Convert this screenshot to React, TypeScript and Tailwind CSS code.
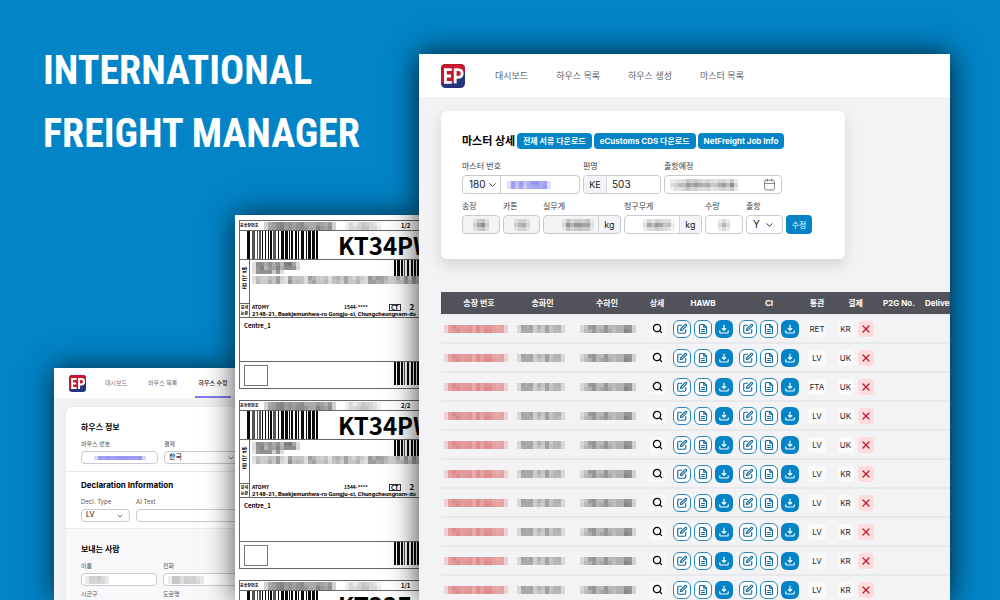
import type { ReactNode } from "react";
import { Search, ChevronDown, Calendar, X } from "lucide-react";

const sans = "font-['Inter','Noto_Sans_CJK_KR',sans-serif]";
const print = "font-['Noto_Sans_CJK_KR','Noto_Sans',sans-serif]";

function noise(n: number) {
  const v = Math.sin(n * 12.9898 + 4.137) * 43758.5453;
  return v - Math.floor(v);
}

/** Pixelated strip that hides private values. */
function Mosaic({ cols, rows = 2, cell = 4, color = "#777", seed = 1, low = 0.2, high = 0.8, className = "" }: {
  cols: number; rows?: number; cell?: number; color?: string; seed?: number; low?: number; high?: number; className?: string;
}) {
  const cells = [];
  for (let r = 0; r < rows; r++)
    for (let c = 0; c < cols; c++) {
      const side = c === 0 || c === cols - 1 ? 0.4 : 1;
      const rim = rows === 3 && r !== 1 ? 0.5 : 1;
      const mix = noise(seed * 31 + c) * 0.7 + noise(seed * 31 + r * 57 + c + 9) * 0.3;
      cells.push(
        <rect key={`${r}-${c}`} x={c * cell} y={r * cell} width={cell} height={cell} fill={color}
          opacity={(low + mix * (high - low)) * side * rim} />
      );
    }
  return (
    <svg aria-hidden="true" width={cols * cell} height={rows * cell} shapeRendering="crispEdges" className={`block shrink-0 ${className}`}>
      {cells}
    </svg>
  );
}

function Barcode({ width, height, seed, className = "" }: { width: number; height: number; seed: number; className?: string }) {
  const bars = [];
  let x = 0;
  let i = 0;
  while (x < width) {
    const w = 1 + Math.floor(noise(seed + i * 3) * 3);
    const bar = Math.min(w, width - x);
    bars.push(<rect key={i} x={x} y={0} width={bar} height={height} fill={noise(seed + i) > 0.75 ? "#555" : "#0a0a0a"} />);
    x += w + 1 + Math.floor(noise(seed + i * 7 + 2) * 1.7);
    i++;
  }
  return (
    <svg aria-hidden="true" width={width} height={height} shapeRendering="crispEdges" className={`block shrink-0 ${className}`}>
      {bars}
    </svg>
  );
}

function Logo({ className }: { className: string }) {
  return (
    <svg viewBox="0 0 24 24" role="img" aria-label="EP" className={`shrink-0 ${className}`}>
      <defs>
        <clipPath id="logo-shape"><rect width="24" height="24" rx="4.5" /></clipPath>
      </defs>
      <g clipPath="url(#logo-shape)">
        <rect width="24" height="24" fill="#24357c" />
        <path d="M0 0H24V8C19 8 17 18 11 19C7 20 3 20 0 19Z" fill="#c8182e" />
      </g>
      <g fill="none" stroke="#fff" strokeWidth="2.8">
        <path d="M10.8 5.6H4.4V18.4H10.8M4.4 12H10" />
        <path d="M14.2 19.6V5.6H17.4A3.6 3.6 0 0 1 17.4 13.3H14.2" />
      </g>
    </svg>
  );
}

function Glyph({ children }: { children: ReactNode }) {
  return (
    <svg aria-hidden="true" viewBox="0 0 24 24" fill="none" stroke="currentColor" strokeWidth="2.3" strokeLinecap="round" strokeLinejoin="round" className="size-[12px]">
      {children}
    </svg>
  );
}

const box = "rounded-[4px] border border-[#c9c9ce] bg-white";
const greyBox = "rounded-[4px] border border-[#c9c9ce] bg-[#f4f4f6]";

function Field({ id, label, className, children }: { id: string; label: string; className: string; children: ReactNode }) {
  return (
    <div className={`flex flex-col ${className}`}>
      <label htmlFor={id} className="h-[15px] text-[8px] leading-[12px] text-[#3f3f46] whitespace-nowrap">{label}</label>
      {children}
    </div>
  );
}

function Masked({ children, align = "justify-start", className = "" }: { children: ReactNode; align?: string; className?: string }) {
  return <span className={`pointer-events-none absolute inset-0 flex items-center ${align} ${className}`}>{children}</span>;
}

function SelectBox({ id, value, options, className, chevron }: { id: string; value: string; options: string[]; className: string; chevron: string }) {
  return (
    <span className={`relative block ${className}`}>
      <select id={id} defaultValue={value} className="h-full w-full appearance-none bg-transparent outline-none">
        {options.map((o) => <option key={o}>{o}</option>)}
      </select>
      <ChevronDown aria-hidden="true" className={`pointer-events-none absolute top-1/2 -translate-y-1/2 text-[#27272a] ${chevron}`} />
    </span>
  );
}

const blank = "h-full w-full min-w-0 bg-transparent outline-none";

function MasterCard() {
  return (
    <form className="mt-[14px] w-[404px] max-w-full rounded-md bg-white px-[21px] pt-[22px] pb-[25px] shadow-[0_6px_14px_rgba(0,0,0,0.13)]">
      <div className="flex items-center gap-[2px]">
        <h2 className="w-[53px] text-[11px] leading-[16px] font-bold whitespace-nowrap text-black">마스터 상세</h2>
        {["전체 서류 다운로드", "eCustoms CDS 다운로드", "NetFreight Job Info"].map((t) => (
          <button key={t} type="button" className="h-[16px] rounded-[4px] bg-[#0284c7] px-[6px] text-[8px] leading-[16px] font-bold whitespace-nowrap text-white">{t}</button>
        ))}
      </div>

      <div className="mt-[11px] flex gap-[3px] text-[10px] text-[#18181b]">
        <Field id="awb" label="마스터 번호" className="w-[118px]">
          <div className={`flex h-[19px] ${box}`}>
            <SelectBox id="prefix" value="180" options={["180", "988"]} className="w-[38px] border-r border-[#c9c9ce] pl-[6px]" chevron="right-[2px] size-[11px]" />
            <div className="relative flex-1">
              <input id="awb" className={blank} />
              <Masked className="pl-[6px]"><Mosaic cols={11} color="#6f70ec" seed={3} low={0.3} high={0.8} /></Masked>
            </div>
          </div>
        </Field>
        <Field id="flight" label="편명" className="w-[78px]">
          <div className={`flex h-[19px] overflow-hidden ${box}`}>
            <span className="w-[23px] border-r border-[#d4d4d8] bg-[#f4f4f6] text-center text-[9px] leading-[17px]">KE</span>
            <input id="flight" defaultValue="503" className="w-full min-w-0 flex-1 pl-[5px] outline-none" />
          </div>
        </Field>
        <Field id="etd" label="출항예정" className="w-[118px]">
          <div className={`relative h-[19px] ${box}`}>
            <input id="etd" className={blank} />
            <Masked align="justify-between" className="pr-[5px] pl-[5px]">
              <Mosaic cols={17} rows={3} color="#666" seed={5} low={0.3} high={0.8} />
              <Calendar className="size-[13px] text-[#71717a]" strokeWidth={1.6} />
            </Masked>
          </div>
        </Field>
      </div>

      <div className="mt-[6px] flex items-end gap-[3px] text-[10px] text-[#18181b]">
        <Field id="waybills" label="송장" className="w-[38px]">
          <div className={`relative h-[19px] ${greyBox}`}>
            <input id="waybills" className={blank} />
            <Masked align="justify-center"><Mosaic cols={4} rows={3} seed={9} low={0.5} high={0.9} /></Masked>
          </div>
        </Field>
        <Field id="cartons" label="카톤" className="w-[37px]">
          <div className={`relative h-[19px] ${greyBox}`}>
            <input id="cartons" className={blank} />
            <Masked align="justify-center"><Mosaic cols={4} rows={3} seed={11} low={0.4} /></Masked>
          </div>
        </Field>
        <Field id="actual" label="실무게" className="w-[78px]">
          <div className={`flex h-[19px] ${greyBox}`}>
            <div className="relative flex-1">
              <input id="actual" className={blank} />
              <Masked align="justify-end" className="pr-[4px]"><Mosaic cols={8} rows={3} seed={13} low={0.4} high={0.9} /></Masked>
            </div>
            <span className="w-[22px] border-l border-[#d4d4d8] text-center text-[9px] leading-[17px]">kg</span>
          </div>
        </Field>
        <Field id="charge" label="청구무게" className="w-[78px]">
          <div className={`flex h-[19px] overflow-hidden ${box}`}>
            <div className="relative flex-1">
              <input id="charge" className={blank} />
              <Masked align="justify-end" className="pr-[4px]"><Mosaic cols={8} rows={3} seed={17} low={0.3} /></Masked>
            </div>
            <span className="w-[22px] border-l border-[#d4d4d8] bg-[#f4f4f6] text-center text-[9px] leading-[17px]">kg</span>
          </div>
        </Field>
        <Field id="quantity" label="수량" className="w-[38px]">
          <div className={`relative h-[19px] ${box}`}>
            <input id="quantity" className={blank} />
            <Masked align="justify-center"><Mosaic cols={3} rows={3} seed={19} low={0.5} high={0.9} /></Masked>
          </div>
        </Field>
        <Field id="departed" label="출항" className="w-[37px]">
          <SelectBox id="departed" value="Y" options={["Y", "N"]} className={`h-[19px] pl-[6px] ${box}`} chevron="right-[7px] size-[11px]" />
        </Field>
        <button type="submit" className="h-[19px] w-[26px] rounded-[4px] bg-[#0284c7] text-[8px] text-white">수정</button>
      </div>
    </form>
  );
}

const outline = "flex size-[18px] items-center justify-center rounded-[6px] border border-[#2b87b8] bg-white text-[#12699c]";

function DocActions({ name }: { name: string }) {
  return (
    <div className="flex justify-center gap-[3px]">
      <button type="button" aria-label={`${name} edit`} className={outline}>
        <Glyph>
          <path d="M11 4.5H6A2.5 2.5 0 0 0 3.500 7v11A2.500 2.500 0 0 0 6 20.500h11a2.500 2.500 0 0 0 2.500-2.500v-5" />
          <path d="M18.200 3.300a1.800 1.800 0 0 1 2.600 2.600L12.500 14.200 9 15l.8-3.500z" />
        </Glyph>
      </button>
      <button type="button" aria-label={`${name} view`} className={outline}>
        <Glyph>
          <path d="M13.500 3H7a2 2 0 0 0-2 2v14a2 2 0 0 0 2 2h10a2 2 0 0 0 2-2V8.500z" />
          <path d="M13.500 3v5.500H19M9 13h6M9 17h6" />
        </Glyph>
      </button>
      <button type="button" aria-label={`${name} download`} className="flex size-[18px] items-center justify-center rounded-[6px] bg-[#0284c7] text-white">
        <Glyph>
          <path d="M12 4v10M8.500 11l3.500 3.500 3.500-3.500M3.500 15.500v2.500a2 2 0 0 0 2 2h13a2 2 0 0 0 2-2v-2.500" />
        </Glyph>
      </button>
    </div>
  );
}

const shipments = [
  ["RET", "KR"], ["LV", "UK"], ["FTA", "UK"], ["LV", "UK"], ["LV", "UK"],
  ["LV", "KR"], ["LV", "KR"], ["LV", "KR"], ["LV", "KR"], ["LV", "KR"],
];

function ShipmentTable() {
  return (
    <table className="mt-[33px] w-[540px] table-fixed border-separate border-spacing-0">
      <colgroup>
        <col className="w-[76px]" /><col className="w-[51px]" /><col className="w-[78px]" /><col className="w-[22px]" /><col className="w-[70px]" />
        <col className="w-[62px]" /><col className="w-[34px]" /><col className="w-[43px]" /><col className="w-[44px]" /><col className="w-[60px]" />
      </colgroup>
      <thead>
        <tr className="h-[22px] bg-[#52525b] text-[8px] text-white">
          {["송장 번호", "송화인", "수하인", "상세", "HAWB", "CI", "통관", "결제", "P2G No."].map((h) => (
            <th key={h} className="p-0 font-bold whitespace-nowrap">{h}</th>
          ))}
          <th className="p-0 pl-[4px] text-left font-bold">Delivery</th>
        </tr>
      </thead>
      <tbody>
        {shipments.map(([customs, pay], i) => (
          <tr key={i} className="h-[29px] text-[#27272a] [&>td]:border-y [&>td]:border-[#e9e9ec]">
            <td className="p-0 pl-[3px]"><Mosaic cols={16} color="#d65a5a" seed={2} low={0.4} high={0.75} /></td>
            <td className="p-0"><Mosaic cols={12} color="#777" seed={4} low={0.25} high={0.7} /></td>
            <td className="p-0 pl-[12px]"><Mosaic cols={14} color="#666" seed={6} low={0.3} high={0.8} /></td>
            <td className="p-0">
              <button type="button" aria-label="상세" className="mx-auto flex size-[16px] items-center justify-center rounded-[4px] bg-[#fafafa] text-black">
                <Search className="size-[11px]" strokeWidth={2.8} />
              </button>
            </td>
            <td className="p-0"><DocActions name="HAWB" /></td>
            <td className="p-0"><DocActions name="CI" /></td>
            <td className="p-0"><span className="mx-auto block w-[18px] rounded-[4px] bg-[#fafafa] text-center text-[8px] leading-[16px]">{customs}</span></td>
            <td className="p-0">
              <div className="flex items-center justify-center gap-[4px]">
                <span className="w-[16px] rounded-[4px] bg-[#fafafa] text-center text-[8px] leading-[16px]">{pay}</span>
                <button type="button" aria-label="삭제" className="flex size-[16px] items-center justify-center rounded-[4px] bg-[#fcdcdc] text-[#b91c2e]">
                  <X className="size-[12px]" strokeWidth={2.4} />
                </button>
              </div>
            </td>
            <td /><td />
          </tr>
        ))}
      </tbody>
    </table>
  );
}

function MasterWindow() {
  return (
    <section className={`absolute top-[54px] right-[50px] bottom-0 left-[419px] overflow-hidden bg-[#f3f3f5] ${sans}`}>
      <header className="flex h-[43px] items-center bg-white px-[22px]">
        <Logo className="size-[24px]" />
        <nav className="ml-[30px] flex gap-[28px] text-[9px] text-[#5f5f66]">
          {["대시보드", "하우스 목록", "하우스 생성", "마스터 목록"].map((t) => <a key={t} href="#" className="whitespace-nowrap">{t}</a>)}
        </nav>
      </header>
      <div className="px-[22px]">
        <MasterCard />
        <ShipmentTable />
      </div>
    </section>
  );
}

function ShippingLabel({ page, code, seed }: { page: string; code: string; seed: number }) {
  return (
    <article className="flex h-[169px] shrink-0 flex-col border border-r-0 border-[#666] text-black">
      <div className="flex h-[10px] shrink-0 items-center border-b border-[#666]">
        <span className="w-[22px] text-[4px] leading-[9px] font-bold whitespace-nowrap">운송장번호</span>
        <Mosaic cols={18} rows={2} color="#555" seed={seed} low={0.4} className="ml-[2px]" />
        <Mosaic cols={9} rows={2} color="#777" seed={seed + 1} low={0.1} high={0.6} className="ml-[9px]" />
        <span className="ml-[20px] text-[6px] leading-[9px] font-bold">{page}</span>
      </div>
      <div className="flex h-[29px] shrink-0 items-start border-b border-[#666] pl-[7px]">
        <Barcode width={72} height={28} seed={7} />
        <strong className="ml-[19px] text-[24px] leading-[28px] font-bold whitespace-nowrap">{code}</strong>
      </div>
      <div className="flex h-[58px] shrink-0 border-b border-[#666]">
        <div className="flex w-[10px] shrink-0 flex-col border-r border-[#666] text-center text-[6px] leading-[8px] font-bold">
          <div className="flex flex-1 flex-col items-center pt-[6px]"><span>받</span><span>는</span><span>분</span></div>
          <div className="h-[14px] border-t border-[#666] text-[4px] leading-[6px]">보내<br />는분</div>
        </div>
        <div className="relative min-w-0 flex-1 pl-[2px]">
          <div className="flex h-[26px] flex-col pt-[2px]">
            <Mosaic cols={12} rows={2} color="#444" seed={21} low={0.3} />
            <Mosaic cols={8} rows={1} color="#444" seed={22} />
            <Mosaic cols={44} rows={2} color="#555" seed={23} low={0.15} high={0.65} className="mt-[2px]" />
          </div>
          <Barcode width={40} height={16} seed={12} className="absolute top-0 left-[144px]" />
          <div className="mt-[17px] flex h-[8px] items-center text-[5px] font-bold">
            <span className="w-[92px]">ATOMY</span>
            <span className="w-[45px]">1544-****</span>
            <span className="border border-[#333] px-[1px] text-[6px] leading-[5px]">CT</span>
            <span className="ml-[9px] text-[8px]">2</span>
          </div>
          <p className="font-[Roboto,sans-serif] text-[6px] leading-[6px] font-bold whitespace-nowrap">2148-21, Baekjemunhwa-ro Gongju-si, Chungcheongnam-do</p>
        </div>
      </div>
      <p className="h-[44px] shrink-0 border-b border-[#666] pt-[3px] pl-[4px] text-[6px] leading-[9px] font-bold">Centre_1</p>
      <div className="flex items-start pl-[4px]">
        <span className="mt-[3px] h-[21px] w-[24px] shrink-0 border border-[#777]" />
        <Barcode width={40} height={23} seed={12} className="ml-[126px]" />
      </div>
    </article>
  );
}

function LabelWindow() {
  return (
    <section className={`absolute top-[215px] bottom-0 left-[235px] w-[184px] overflow-hidden bg-white shadow-[0_0_28px_rgba(0,0,0,0.7)] ${print}`}>
      <div className="flex flex-col gap-[11px] pt-[5px] pl-[4px]">
        <ShippingLabel page="1/2" code="KT34PW" seed={41} />
        <ShippingLabel page="2/2" code="KT34PW" seed={41} />
        <ShippingLabel page="1/1" code="KT33E" seed={41} />
      </div>
    </section>
  );
}

function SmallField({ id, label, className, children }: { id: string; label: string; className: string; children?: ReactNode }) {
  return (
    <div className={`shrink-0 ${className}`}>
      <label htmlFor={id} className="block h-[12px] text-[6px] leading-[10px] whitespace-nowrap text-[#52525b]">{label}</label>
      {children}
    </div>
  );
}

function HouseWindow() {
  return (
    <section className={`absolute top-[368px] bottom-0 left-[54px] w-[181px] overflow-hidden bg-[#f3f3f5] shadow-[0_0_28px_rgba(0,0,0,0.7)] ${sans}`}>
      <header className="flex h-[30px] items-center bg-white pl-[15px]">
        <Logo className="size-[17px]" />
        <nav className="ml-[19px] flex h-full gap-[21px] text-[6px] leading-[30px] whitespace-nowrap text-[#71717a]">
          <a href="#">대시보드</a>
          <a href="#">하우스 목록</a>
          <a href="#" className="-mx-[3px] border-b-2 border-[#7c7cf0] px-[3px] font-medium text-[#18181b]">하우스 수정</a>
        </nav>
      </header>
      <form className="mt-[9px] ml-[12px] w-[220px] rounded-t-md bg-white shadow-[0_0_10px_rgba(0,0,0,0.06)]">
        <fieldset className="h-[65px] border-b border-[#e9e9ec] pt-[14px] pl-[15px]">
          <h3 className="text-[8px] leading-[12px] font-bold text-black">하우스 정보</h3>
          <div className="mt-[6px] flex gap-[6px] text-[7px]">
            <SmallField id="house-no" label="하우스 번호" className="w-[77px]">
              <div className={`relative h-[13px] ${box}`}>
                <input id="house-no" className={blank} />
                <Masked className="pl-[12px]"><Mosaic cols={13} rows={1} color="#7c7cf0" seed={3} low={0.7} high={0.8} /></Masked>
              </div>
            </SmallField>
            <SmallField id="payment" label="결제" className="w-[77px]">
              <SelectBox id="payment" value="한국" options={["한국", "영국"]} className={`h-[13px] pl-[4px] ${box}`} chevron="right-[5px] size-[8px]" />
            </SmallField>
          </div>
        </fieldset>
        <fieldset className="h-[57px] border-b border-[#e9e9ec] pt-[7px] pl-[15px]">
          <h3 className="text-[8px] leading-[12px] font-bold text-black">Declaration Information</h3>
          <div className="mt-[6px] flex gap-[6px] text-[7px]">
            <SmallField id="decl" label="Decl. Type" className="w-[49px]">
              <SelectBox id="decl" value="LV" options={["LV", "RET", "FTA"]} className={`h-[13px] pl-[4px] ${box}`} chevron="right-[5px] size-[8px]" />
            </SmallField>
            <SmallField id="ai-text" label="AI Text" className="w-[120px]">
              <div className={`h-[13px] ${box}`}><input id="ai-text" className={blank} /></div>
            </SmallField>
          </div>
        </fieldset>
        <fieldset className="bg-[#f8f8fa] pt-[14px] pb-[20px] pl-[15px]">
          <h3 className="text-[8px] leading-[12px] font-bold text-black">보내는 사람</h3>
          <div className="mt-[6px] flex gap-[6px]">
            <SmallField id="sender" label="이름" className="w-[76px]">
              <div className={`relative h-[13px] ${box}`}>
                <input id="sender" className={blank} />
                <Masked className="pl-[3px]"><Mosaic cols={6} rows={2} seed={33} high={0.5} /></Masked>
              </div>
            </SmallField>
            <SmallField id="phone" label="전화" className="w-[76px]">
              <div className={`relative h-[13px] ${box}`}>
                <input id="phone" className={blank} />
                <Masked className="pl-[4px]"><Mosaic cols={9} rows={2} seed={35} high={0.5} /></Masked>
              </div>
            </SmallField>
          </div>
          <div className="mt-[3px] flex gap-[6px]">
            <SmallField id="city" label="시군구" className="w-[76px]"><div className={`h-[13px] ${box}`}><input id="city" className={blank} /></div></SmallField>
            <SmallField id="street" label="도로명" className="w-[76px]"><div className={`h-[13px] ${box}`}><input id="street" className={blank} /></div></SmallField>
          </div>
        </fieldset>
      </form>
    </section>
  );
}

export default function App() {
  return (
    <main className="relative h-screen overflow-hidden bg-[#0284c7]">
      <h1 className="pt-[39px] pl-[43px] font-['Roboto_Condensed',Roboto,sans-serif] text-[40px] leading-[63px] font-bold text-white">
        INTERNATIONAL<br />FREIGHT MANAGER
      </h1>
      <HouseWindow />
      <LabelWindow />
      <div className="pointer-events-none absolute top-[54px] right-[50px] bottom-0 left-[419px] shadow-[0_0_28px_rgba(0,0,0,0.8)]" />
      <MasterWindow />
    </main>
  );
}
